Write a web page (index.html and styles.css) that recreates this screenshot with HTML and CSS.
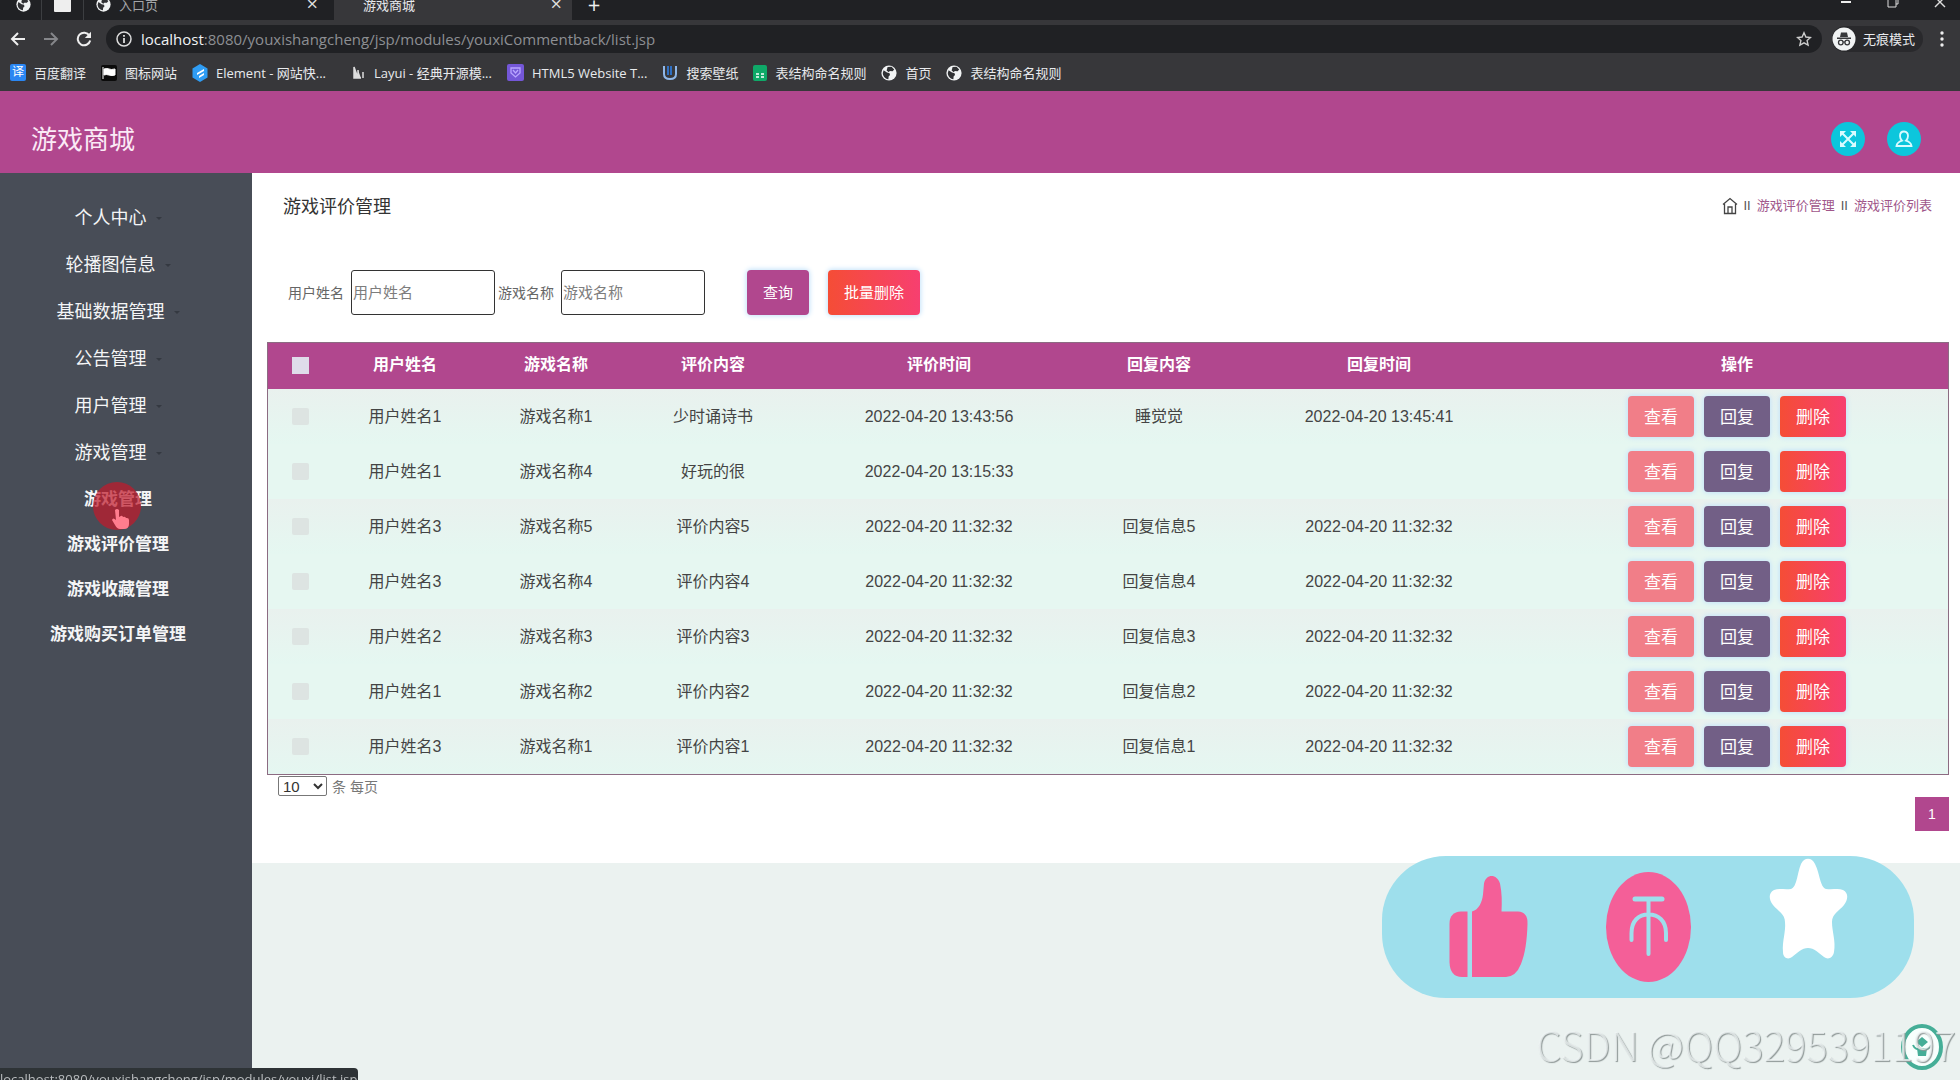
FILE: index.html
```html
<!DOCTYPE html>
<html lang="zh-CN">
<head>
<meta charset="utf-8">
<title>游戏商城</title>
<link rel="stylesheet" href="styles.css">
</head>
<body>
<svg class="defs" aria-hidden="true">
  <symbol id="globe" viewBox="0 0 16 16"><circle cx="8" cy="8" r="7.6" fill="#f1f3f4"/><path d="M2.6 5.2 6 7.6 8.6 8.2 9 10 7.6 11.4 7.4 14.2C3.8 13.8 1.8 10.8 1.8 8zM6.6 2l4-.2 2.6 2.6-1.6 1.8-2.8-.2-1 1.2-2.2-1.6z" fill="#303134"/></symbol>
</svg>
<div class="browser">
  <div class="tabs">
    <div class="tab pinned"><svg width="15" height="15"><use href="#globe"/></svg></div>
    <div class="tab pinned"><svg width="17" height="15" viewBox="0 0 17 15"><rect width="17" height="15" rx="1" fill="#eee"/></svg></div>
    <div class="tab wide"><svg width="15" height="15"><use href="#globe"/></svg><span>入口页</span><button class="close" aria-label="关闭">×</button></div>
    <div class="tab active"><span>游戏商城</span><button class="close" aria-label="关闭">×</button></div>
    <button class="newtab" aria-label="新标签页">+</button>
    <div class="winctl">
      <svg width="12" height="12" viewBox="0 0 12 12"><path d="M1 6h10" stroke="#eee" stroke-width="2"/></svg>
      <svg width="12" height="12" viewBox="0 0 12 12"><path d="M1 3h8v8H1zM4 3V1h7v7H9" fill="none" stroke="#ddd"/></svg>
      <svg width="12" height="12" viewBox="0 0 12 12"><path d="m1 1 10 10M11 1 1 11" stroke="#ddd" stroke-width="1.4"/></svg>
    </div>
  </div>
  <div class="toolbar">
    <svg width="16" height="16" viewBox="0 0 16 16"><path d="M15 8H2M8 2 2 8l6 6" fill="none" stroke="#eee" stroke-width="2"/></svg>
    <svg width="16" height="16" viewBox="0 0 16 16"><path d="M1 8h13M8 2l6 6-6 6" fill="none" stroke="#85868a" stroke-width="2"/></svg>
    <svg width="16" height="16" viewBox="0 0 16 16"><path d="M13.4 4.6A6.3 6.3 0 1 0 14.2 9.500" fill="none" stroke="#eee" stroke-width="2"/><path d="M15 .8V7H8.800z" fill="#eee"/></svg>
    <div class="address">
      <svg width="16" height="16" viewBox="0 0 16 16"><circle cx="8" cy="8" r="7" fill="none" stroke="#ddd" stroke-width="1.5"/><path d="M8 7v5M8 4v1.800" stroke="#ddd" stroke-width="1.8"/></svg>
      <span class="url"><b>localhost</b>:8080/youxishangcheng/jsp/modules/youxiCommentback/list.jsp</span>
      <svg width="16" height="16" viewBox="0 0 16 16"><path d="m8 1.800 1.900 4.200 4.600.5-3.400 3.100 1 4.500L8 11.800l-4.100 2.300 1-4.500L1.500 6.500l4.600-.5z" fill="none" stroke="#ccc" stroke-width="1.4"/></svg>
    </div>
    <div class="incognito">
      <svg width="24" height="24" viewBox="0 0 24 24"><circle cx="12" cy="12" r="11.500" fill="#f1f3f4"/><path d="M8 10 9 5.500h6l1 4.500zM5 10.500h14v1.500H5z" fill="#36373a"/><circle cx="8.800" cy="15.500" r="2.300" fill="none" stroke="#36373a" stroke-width="1.300"/><circle cx="15.200" cy="15.500" r="2.300" fill="none" stroke="#36373a" stroke-width="1.300"/><path d="M11 15h2" stroke="#36373a"/></svg>
      <span>无痕模式</span>
    </div>
    <svg class="dots" width="4" height="16" viewBox="0 0 4 16"><g fill="#eee"><circle cx="2" cy="2" r="1.700"/><circle cx="2" cy="8" r="1.700"/><circle cx="2" cy="14" r="1.700"/></g></svg>
  </div>
  <nav class="bookmarks">
    <a href="#"><i class="ic-fanyi">译</i>百度翻译</a>
    <a href="#"><svg width="16" height="16" viewBox="0 0 16 16"><rect width="16" height="16" rx="2" fill="#0b0b0b"/><path d="M2 2v12M3 4q3-1 5 0t6 0v6q-3 1-6 0t-5 0z" fill="#fff" stroke="#fff"/></svg>图标网站</a>
    <a href="#"><svg width="16" height="18" viewBox="0 0 16 18"><path d="m8 0 7.500 4.500v9L8 18 .5 13.500v-9z" fill="#2f9df4"/><path d="m12 5-7 4v2l7-4zM12 9l-5 3v2l5-3z" fill="#fff"/></svg>Element - 网站快...</a>
    <a href="#" class="layui"><svg width="14" height="16" viewBox="0 0 14 16"><path d="M2 2v11h4zM6 5v8h3M11 7v6" fill="#ddd" stroke="#ddd" stroke-width="1.500"/></svg>Layui - 经典开源模...</a>
    <a href="#"><svg width="17" height="17" viewBox="0 0 17 17"><rect width="17" height="17" rx="2" fill="#7457d8"/><path d="M4 4h9v5l-4.500 4L4 9zM6 6l2.500 3L11 6" fill="none" stroke="#b9a6ff" stroke-width="1.300"/></svg>HTML5 Website T...</a>
    <a href="#"><svg width="16" height="17" viewBox="0 0 16 17"><path d="M2 2v8q0 5 6 5t6-5V2" fill="none" stroke="#8fb7e8" stroke-width="2"/><path d="M6 2v9M9 2v9" stroke="#2f6fc2" stroke-width="2"/></svg>搜索壁纸</a>
    <a href="#"><svg width="14" height="16" viewBox="0 0 14 16"><rect width="14" height="16" rx="2" fill="#0fa968"/><path d="M3 9h3M8 9h3M3 12h3M8 12h3" stroke="#fff" stroke-width="1.500"/></svg>表结构命名规则</a>
    <a href="#"><svg width="16" height="16"><use href="#globe"/></svg>首页</a>
    <a href="#"><svg width="16" height="16"><use href="#globe"/></svg>表结构命名规则</a>
  </nav>
</div>

<header class="site-header">
  <h1>游戏商城</h1>
  <div class="actions">
    <button aria-label="全屏"><svg width="18" height="18" viewBox="0 0 18 18"><path d="m3 3 12 12M15 3 3 15" stroke="#d9fbff" stroke-width="2"/><path d="M1 1h6L1 7zM17 1v6l-6-6zM1 17v-6l6 6zM17 17h-6l6-6z" fill="#d9fbff"/></svg></button>
    <button aria-label="用户"><svg width="18" height="18" viewBox="0 0 18 18"><path d="M9 1.500c-3 0-4 2-4 4.500 0 2 .9 3.700 2 4.700-2.500.8-5 2-5.500 5.300h15c-.5-3.300-3-4.500-5.500-5.300 1.100-1 2-2.700 2-4.700 0-2.500-1-4.500-4-4.500z" fill="none" stroke="#d9fbff" stroke-width="1.800"/></svg></button>
  </div>
</header>

<div class="layout">
  <aside class="sidebar">
    <ul class="menu">
      <li><a href="#">个人中心</a></li>
      <li><a href="#">轮播图信息</a></li>
      <li><a href="#">基础数据管理</a></li>
      <li><a href="#">公告管理</a></li>
      <li><a href="#">用户管理</a></li>
      <li><a href="#">游戏管理</a>
        <ul class="submenu">
          <li><a href="#">游戏管理</a>
            <svg class="pointer" width="48" height="48" viewBox="0 0 48 48"><circle cx="24" cy="24" r="24" fill="#c11a2b" fill-opacity=".72"/><path d="M22 28q2-2 4 0v7l1-.5q2-1.500 3 .5 2-1 3 1 3-.5 3 2v4q0 5-5 5h-4q-3 0-5-4l-3-5q1-3 4 0z" fill="#ff7d8e"/></svg>
          </li>
          <li><a href="#">游戏评价管理</a></li>
          <li><a href="#">游戏收藏管理</a></li>
          <li><a href="#">游戏购买订单管理</a></li>
        </ul>
      </li>
    </ul>
  </aside>
  <main class="content">
    <section class="panel">
      <div class="page-head">
        <h2>游戏评价管理</h2>
        <nav class="crumbs">
          <a href="#" aria-label="首页"><svg width="16" height="18" viewBox="0 0 16 18"><path d="M1 7.500 8 1.500l7 6M2.500 7v9.500h11V7M6 16v-6h4v6" fill="none" stroke="#444" stroke-width="1.300"/></svg></a>
          <span>II</span><a href="#">游戏评价管理</a><span>II</span><a href="#">游戏评价列表</a>
        </nav>
      </div>
      <form class="search">
        <label for="uname">用户姓名</label><input id="uname" type="text" placeholder="用户姓名">
        <label for="gname">游戏名称</label><input id="gname" type="text" placeholder="游戏名称">
        <button type="button" class="btn query">查询</button>
        <button type="button" class="btn danger batch">批量删除</button>
      </form>
      <table class="data">
        <colgroup><col class="c-check"><col class="c-user"><col class="c-game"><col class="c-text"><col class="c-time"><col class="c-reply"><col class="c-time"><col></colgroup>
        <thead><tr><th><input type="checkbox" aria-label="全选"></th><th>用户姓名</th><th>游戏名称</th><th>评价内容</th><th>评价时间</th><th>回复内容</th><th>回复时间</th><th>操作</th></tr></thead>
        <tbody>
          <tr><td><input type="checkbox" aria-label="选择"></td><td>用户姓名1</td><td>游戏名称1</td><td>少时诵诗书</td><td>2022-04-20 13:43:56</td><td>睡觉觉</td><td>2022-04-20 13:45:41</td><td><div class="ops"><button class="btn view">查看</button><button class="btn reply">回复</button><button class="btn danger">删除</button></div></td></tr>
          <tr><td><input type="checkbox" aria-label="选择"></td><td>用户姓名1</td><td>游戏名称4</td><td>好玩的很</td><td>2022-04-20 13:15:33</td><td></td><td></td><td><div class="ops"><button class="btn view">查看</button><button class="btn reply">回复</button><button class="btn danger">删除</button></div></td></tr>
          <tr><td><input type="checkbox" aria-label="选择"></td><td>用户姓名3</td><td>游戏名称5</td><td>评价内容5</td><td>2022-04-20 11:32:32</td><td>回复信息5</td><td>2022-04-20 11:32:32</td><td><div class="ops"><button class="btn view">查看</button><button class="btn reply">回复</button><button class="btn danger">删除</button></div></td></tr>
          <tr><td><input type="checkbox" aria-label="选择"></td><td>用户姓名3</td><td>游戏名称4</td><td>评价内容4</td><td>2022-04-20 11:32:32</td><td>回复信息4</td><td>2022-04-20 11:32:32</td><td><div class="ops"><button class="btn view">查看</button><button class="btn reply">回复</button><button class="btn danger">删除</button></div></td></tr>
          <tr><td><input type="checkbox" aria-label="选择"></td><td>用户姓名2</td><td>游戏名称3</td><td>评价内容3</td><td>2022-04-20 11:32:32</td><td>回复信息3</td><td>2022-04-20 11:32:32</td><td><div class="ops"><button class="btn view">查看</button><button class="btn reply">回复</button><button class="btn danger">删除</button></div></td></tr>
          <tr><td><input type="checkbox" aria-label="选择"></td><td>用户姓名1</td><td>游戏名称2</td><td>评价内容2</td><td>2022-04-20 11:32:32</td><td>回复信息2</td><td>2022-04-20 11:32:32</td><td><div class="ops"><button class="btn view">查看</button><button class="btn reply">回复</button><button class="btn danger">删除</button></div></td></tr>
          <tr><td><input type="checkbox" aria-label="选择"></td><td>用户姓名3</td><td>游戏名称1</td><td>评价内容1</td><td>2022-04-20 11:32:32</td><td>回复信息1</td><td>2022-04-20 11:32:32</td><td><div class="ops"><button class="btn view">查看</button><button class="btn reply">回复</button><button class="btn danger">删除</button></div></td></tr>
        </tbody>
      </table>
      <div class="page-size"><select id="size"><option>10</option></select><label for="size">条 每页</label></div>
      <div class="pager"><button>1</button></div>
    </section>
  </main>
</div>

<div class="rating">
  <svg viewBox="0 0 532 142" aria-hidden="true">
    <path d="M85.500 55.500H79Q67.500 56 67.500 68v38q.5 15 12.500 15h5.500z" fill="#f45f98"/>
    <path d="M90 55.500c7-2 10-9 11-17l1-11c2-10 13-10 16 0 2 9 2 19 1.500 28H136q10 .5 9.500 12.500c-.5 17-2.500 30-6.500 40q-5 12.500-15 13H90z" fill="#f45f98"/>
    <ellipse cx="266.500" cy="71" rx="42.500" ry="55" fill="#f45f98"/>
    <path d="M253 43h27" stroke="#9edfec" stroke-width="5" stroke-linecap="round"/>
    <path d="M266.500 43v55M249.500 84v-7c0-12 7-18.500 17-18.500s17.500 6.500 17.500 18.500v7" fill="none" stroke="#9edfec" stroke-width="4" stroke-linecap="round"/>
    <path d="M419 8c3-7 11-7 14 0 5 10 5 23 11 25 7 1 12-1 17 1 6 3 5 10 1 15-5 6-12 9-12 17 0 10 4 19 2 30-1 6-6 8-10 5-5-4-10-9-16-9s-11 5-16 9c-4 3-9 1-9-5-1-11 3-20 2-30 0-8-7-11-12-17-4-5-5-12 1-15 5-2 10 0 17-1 6-2 6-15 10-25z" fill="#fff"/>
  </svg>
</div>
<button class="helper" aria-label="助手"><svg width="42" height="46" viewBox="0 0 42 46"><ellipse cx="21" cy="23" rx="19" ry="21" fill="#f8fffd" stroke="#45ae97" stroke-width="4"/><path d="m21 13 6 5-6 5-6-5zM16 24h10l-1 8h-8z" fill="#45ae97"/><path d="M12 21q2 5 9 5t9-5" fill="none" stroke="#45ae97" stroke-width="2"/></svg></button>
<div class="watermark">CSDN @QQ3295391197</div>
<div class="status"><span>localhost:8080/youxishangcheng/jsp/modules/youxi/list.jsp</span></div>
</body>
</html>
```
FILE: styles.css
```css
* { box-sizing: border-box; }
body {
  margin: 0;
  min-height: 100vh;
  display: flex;
  flex-direction: column;
  font-family: "Liberation Sans", "Noto Sans CJK SC", sans-serif;
  background: #ebf2f0;
  color: #444;
}
a { color: inherit; text-decoration: none; }
button { border: 0; padding: 0; font-family: inherit; cursor: pointer; }
svg { flex: none; display: block; }
.defs { position: absolute; width: 0; height: 0; }

/* browser frame */
.browser {
  background: #37373a;
  color: #e8eaed;
  font-family: "Open Sans", "Noto Sans CJK SC", sans-serif;
  font-size: 13px;
}
.tabs {
  height: 20px;
  display: flex;
  align-items: flex-end;
  overflow: hidden;
  background: #202124;
}
.tab {
  height: 32px;
  flex: none;
  display: flex;
  align-items: center;
  gap: 8px;
  color: #a4a6a9;
}
.pinned { width: 42px; padding-left: 16px; border-right: 1px solid #3c3e41; }
.pinned + .pinned { padding-left: 12px; }
.wide { width: 250px; padding: 0 16px 0 12px; }
.active {
  width: 238px;
  padding: 0 10px 0 29px;
  background: #37373a;
  color: #e8eaed;
  border-radius: 8px 8px 0 0;
}
.close { margin-left: auto; background: none; color: #ddd; font-size: 20px; line-height: 20px; }
.newtab { width: 44px; height: 32px; background: none; color: #eee; font-size: 22px; line-height: 28px; }
.winctl { margin-left: auto; height: 32px; display: flex; align-items: center; gap: 35px; padding: 0 14px 4px 0; }
.toolbar { height: 34px; display: flex; align-items: center; gap: 17px; padding: 4px 16px 0 10px; }
.address {
  flex: 1;
  height: 28px;
  display: flex;
  align-items: center;
  gap: 9px;
  margin-left: -3px;
  padding: 0 10px;
  border-radius: 14px;
  background: #202124;
}
.url { flex: 1; font-size: 15px; line-height: 20px; color: #8d8f93; }
.url b { font-weight: 400; color: #f1f3f4; }
.incognito {
  display: flex;
  align-items: center;
  gap: 7px;
  margin-left: -7px;
  padding-right: 8px;
  border-radius: 14px;
  background: #29292c;
  line-height: 26px;
}
.bookmarks { height: 37px; display: flex; align-items: center; gap: 15px; padding: 0 10px; }
.bookmarks a { display: flex; align-items: center; gap: 8px; white-space: nowrap; line-height: 18px; }
.bookmarks .layui { margin-left: 11px; }
.ic-fanyi { width: 16px; height: 17px; border-radius: 2px; background: #2a86f2; color: #fff; font-style: normal; font-size: 12px; line-height: 16px; text-align: center; }

/* header */
.site-header {
  height: 82px;
  display: flex;
  align-items: center;
  justify-content: space-between;
  padding: 13px 39px 0 31px;
  background: #b1478e;
}
.site-header h1 { margin: 0; padding-top: 3px; font-size: 26px; line-height: 36px; font-weight: 400; color: #fbeaf6; }
.actions { display: flex; gap: 22px; }
.actions button { width: 34px; height: 34px; display: grid; place-items: center; border-radius: 50%; background: #0cc6dc; }

/* layout */
.layout { flex: 1; display: flex; }
.sidebar { width: 252px; flex: none; background: #484d57; padding: 22px 16px 0 0; }
.menu, .submenu { list-style: none; margin: 0; padding: 0; text-align: center; color: #f4f5f6; }
.menu > li > a { display: flex; align-items: center; justify-content: center; gap: 9px; font-size: 18px; line-height: 47px; }
.menu > li > a::after { content: ""; border: 3px solid transparent; border-top-color: #343941; border-bottom: 0; }
.submenu li { position: relative; }
.submenu a { display: block; font-size: 17px; line-height: 45px; font-weight: 700; }
.pointer { position: absolute; left: 93px; top: 5px; pointer-events: none; }
.content { flex: 1; min-width: 0; }
.panel { background: #fff; padding: 0 11px 32px 15px; }
.page-head { height: 97px; display: flex; justify-content: space-between; padding: 20px 17px 0 16px; }
.page-head h2 { margin: 0; font-size: 18px; line-height: 28px; font-weight: 400; color: #333; }
.crumbs { display: flex; gap: 6px; font-size: 13px; line-height: 26px; height: 26px; align-items: center; color: #555; }
.crumbs a { color: #a0568a; }
.search { display: flex; align-items: center; padding: 0 21px; margin-bottom: 27px; font-size: 14px; color: #666; }
.search label { margin-right: 7px; line-height: 20px; }
.search input {
  width: 144px;
  height: 45px;
  margin-right: 3px;
  padding: 0 1px;
  border: 1px solid #333;
  border-radius: 3px;
  font: 15px "Liberation Sans", "Noto Sans CJK SC", sans-serif;
}
.search input::placeholder { color: #7d7d7d; }
.btn { border-radius: 4px; color: #fff; box-shadow: 0 0 5px 1px #c5e3fa; }
.query, .batch { height: 45px; font-size: 15px; padding: 0 16px 2px; }
.query { margin: 0 19px 0 39px; background: #b1478e; }
.danger { background: linear-gradient(90deg, #f54d36, #f73f70); }
.view { background: #f17e88; }
.reply { background: #725f86; }

/* table */
.data {
  width: 100%;
  table-layout: fixed;
  border-collapse: separate;
  border-spacing: 0;
  border: 1px solid #8c6b82;
  font-size: 16px;
  line-height: 24px;
  text-align: center;
  background: #e7f4ef;
}
.c-check { width: 64px; }
.c-user { width: 146px; }
.c-game { width: 156px; }
.c-text { width: 158px; }
.c-time { width: 294px; }
.c-reply { width: 146px; }
.data th { height: 46px; padding: 0 0 2px; background: #b1478e; color: #fff; }
.data td { height: 55px; padding: 0; }
.data tbody tr { background: linear-gradient(#e9f1ee, #e5f7f1); }
.data tbody tr:nth-child(even) { background: #e6f7f1; }
.data input { appearance: none; width: 17px; height: 17px; display: block; margin: 0 auto; border-radius: 2px; background: #dde4e2; }
.data th input { background: #dfdcea; border-radius: 0; }
.ops { display: flex; justify-content: center; gap: 10px; }
.ops .btn { width: 66px; height: 41px; padding-bottom: 3px; font-size: 17px; }
.page-size { display: flex; align-items: center; gap: 5px; height: 22px; padding-left: 11px; font-size: 14px; color: #777; }
.page-size select { width: 49px; height: 20px; padding: 0; border: 1px solid #777; border-radius: 2px; background: #fff; color: #333; font: 15px "Liberation Sans", sans-serif; }
.pager { display: flex; justify-content: flex-end; }
.pager button { width: 34px; height: 34px; background: #b1478e; color: #fff; font-size: 14px; }

/* overlays */
.rating { position: fixed; right: 46px; bottom: 82px; width: 532px; height: 142px; border-radius: 64px; background: #9edfec; }
.helper { position: fixed; right: 17px; bottom: 10px; background: none; }
.watermark {
  position: fixed;
  right: 4px;
  bottom: 12px;
  font: 300 40px/48px "Noto Sans CJK SC", sans-serif;
  color: rgba(240, 246, 245, .75);
  text-shadow: 1px 1px 1px #8f9897;
}
.status {
  position: fixed;
  left: 0;
  bottom: 0;
  width: 358px;
  height: 12px;
  overflow: hidden;
  border-radius: 0 4px 0 0;
  background: #2e3336;
  color: #b9bcbe;
  font: 13px/22px "Open Sans", sans-serif;
  white-space: nowrap;
}
```
